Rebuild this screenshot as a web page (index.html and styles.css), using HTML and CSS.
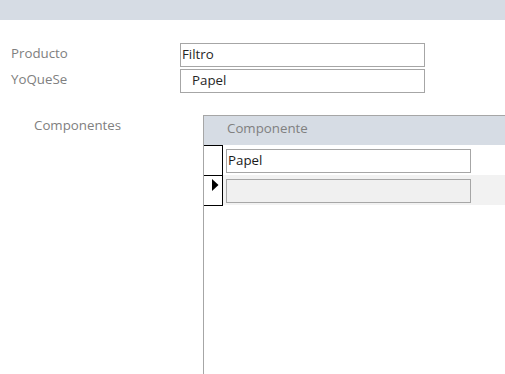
FILE: index.html
```html
<!DOCTYPE html>
<html lang="es">
<head>
    <meta charset="UTF-8">
    <title>Producto</title>
    <link rel="stylesheet" href="styles.css">
</head>
<body>
    <div class="topbar"></div>

    <!-- Main fields -->
    <div class="fields">
        <div class="field">
            <label class="label">Producto</label>
            <input class="textbox" type="text" value="Filtro">
        </div>
        <div class="field">
            <label class="label">YoQueSe</label>
            <input class="textbox indent" type="text" value="Papel">
        </div>
    </div>

    <!-- Subform -->
    <div class="section">
        <div class="section-label">Componentes</div>
        <div class="subform">
            <div class="subform-header">Componente</div>
            <div class="row">
                <div class="selector"></div>
                <div class="cell">
                    <input class="textbox small" type="text" value="Papel">
                </div>
            </div>
            <div class="row new">
                <div class="selector last">
                    <svg width="7" height="12" viewBox="0 0 7 12"><polygon points="0,0 6.5,6 0,12" fill="#000"/></svg>
                </div>
                <div class="cell">
                    <input class="textbox small empty" type="text" value="">
                </div>
            </div>
        </div>
    </div>
</body>
</html>
```

FILE: styles.css
```css
/* Form layout */
body {
    margin: 0;
    height: 374px;
    overflow: hidden;
    background-color: white;
    font-family: "Open Sans", Arial, sans-serif;
    font-size: 13.3px;
}
.topbar {
    height: 20px;
    background-color: #d6dce4;
}
.fields {
    padding: 23px 0 0 11px;
    display: flex;
    flex-direction: column;
    gap: 2px;
}
.field {
    display: flex;
    align-items: flex-start;
}
.label {
    width: 169px;
    line-height: 19px;
    margin-top: 1px;
    color: #808080;
}
.textbox {
    box-sizing: border-box;
    width: 245px;
    height: 24px;
    margin: 0;
    padding: 0 1px 2px 1px;
    border: 1px solid #a6a6a6;
    background-color: white;
    color: #262626;
    font-family: "Open Sans", Arial, sans-serif;
    font-size: 13.3px;
    outline: none;
}
.textbox.indent {
    padding-left: 11px;
}
.section {
    display: flex;
    margin-top: 22px;
}
.section-label {
    width: 169px;
    padding-left: 34px;
    line-height: 19px;
    margin-top: 1px;
    color: #808080;
}
.subform {
    flex: 1;
    height: 259px;
    border-top: 1px solid #a6a6a6;
    border-left: 1px solid #a6a6a6;
}
.subform-header {
    height: 29px;
    box-sizing: border-box;
    padding: 3px 0 0 23px;
    line-height: 19px;
    background-color: #d6dce4;
    color: #808080;
}
.row {
    display: flex;
    height: 30px;
}
.selector {
    box-sizing: border-box;
    width: 19px;
    border-top: 1px solid black;
    border-right: 1px solid black;
    display: flex;
    align-items: flex-start;
    padding: 3px 0 0 8px;
}
.selector.last {
    height: 31px;
    border-bottom: 1px solid black;
}
.cell {
    flex: 1;
    padding: 4px 0 0 3px;
}
.row.new .cell {
    background-color: #f2f2f2;
}
.textbox.small {
    width: 245px;
    color: #1a1a1a;
}
.textbox.empty {
    background-color: #f0f0f0;
}
```
